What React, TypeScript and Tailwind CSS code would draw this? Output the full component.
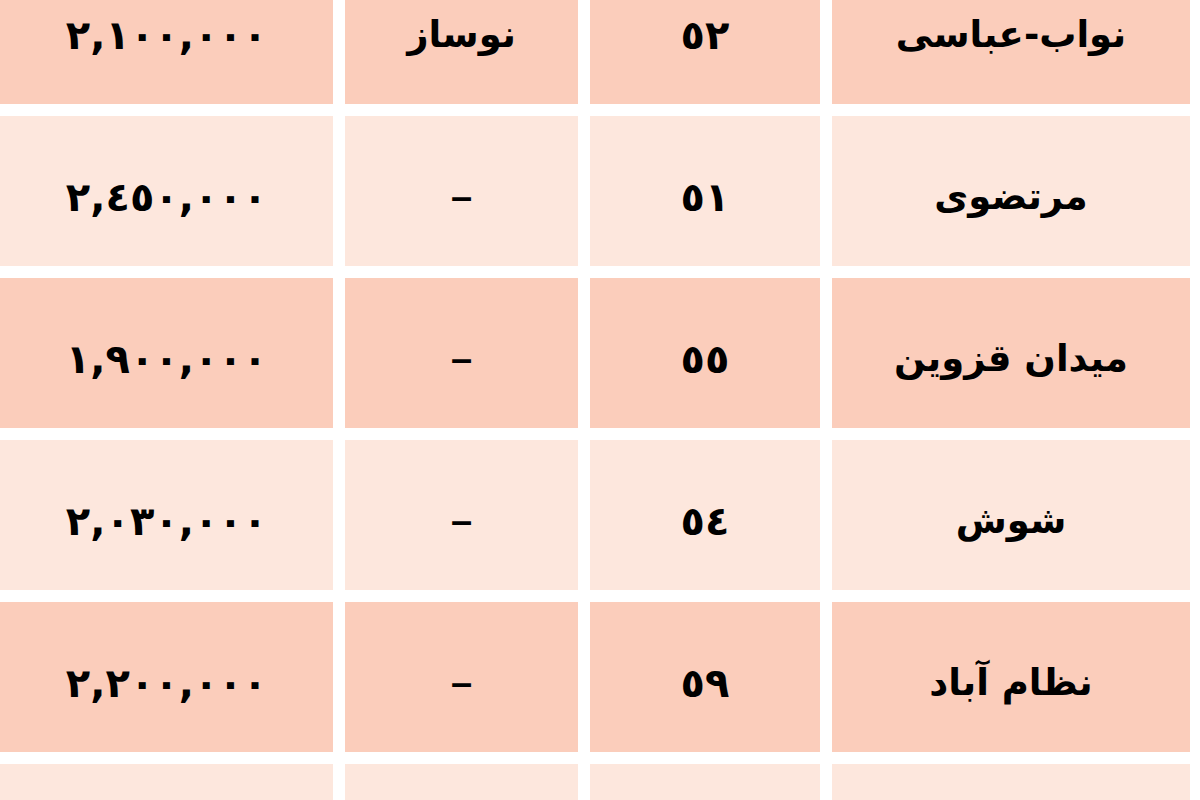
const rows = [
  { name: "نواب-عباسی", age: "٥٢", note: "نوساز", price: "٢,١٠٠,٠٠٠" },
  { name: "مرتضوی", age: "٥١", note: "–", price: "٢,٤٥٠,٠٠٠" },
  { name: "میدان قزوین", age: "٥٥", note: "–", price: "١,٩٠٠,٠٠٠" },
  { name: "شوش", age: "٥٤", note: "–", price: "٢,٠٣٠,٠٠٠" },
  { name: "نظام آباد", age: "٥٩", note: "–", price: "٢,٢٠٠,٠٠٠" },
  { name: "", age: "", note: "", price: "" },
];

export default function App() {
  return (
    <div
      className="h-[800px] w-[1200px] overflow-hidden bg-white text-black"
      style={{ fontFamily: '"DejaVu Sans", "Noto Sans", sans-serif' }}
    >
      <div className="-mt-[46px] flex flex-col gap-[12px] pr-[10px]">
        {rows.map((r, i) => {
          const bg = i % 2 === 0 ? "bg-[#fbcdbb]" : "bg-[#fde7dd]";
          return (
            <div
              key={i}
              dir="rtl"
              className="grid h-[150px] grid-cols-[358px_230px_233px_333px] gap-x-[12px] font-bold"
            >
              <div className={`${bg} flex items-center justify-center pt-3 text-[37px]`}>{r.name}</div>
              <div className={`${bg} flex items-center justify-center pt-3 text-[40px]`}>{r.age}</div>
              <div className={`${bg} flex items-center justify-center pt-3 text-[37px]`}>
                {r.note === "–" ? (
                  <span className="font-['Liberation_Sans',sans-serif] text-[38px] font-bold">–</span>
                ) : (
                  r.note
                )}
              </div>
              <div className={`${bg} flex items-center justify-center pt-3 text-[40px]`}>{r.price}</div>
            </div>
          );
        })}
      </div>
    </div>
  );
}
